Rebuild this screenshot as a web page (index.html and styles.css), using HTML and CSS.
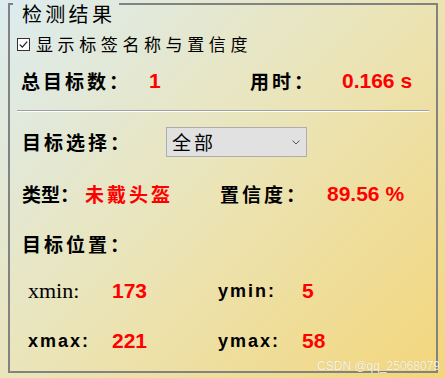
FILE: index.html
```html
<!DOCTYPE html>
<html lang="zh-CN">
<head>
  <meta charset="UTF-8" />
  <title>检测结果</title>
  <link rel="stylesheet" href="styles.css">
</head>
<body>

  <div class="panel">
    <div class="head">
      <span class="head-edge"></span>
      <span class="head-title">检测结果</span>
      <span class="head-fill"></span>
    </div>

    <div class="content">
      <label class="check-row">
        <svg class="check" width="13" height="13" viewBox="0 0 13 13">
          <rect x="0.5" y="0.5" width="12" height="12" fill="#fff" stroke="#333"/>
          <polyline points="2.8,6.6 5.3,9.1 10.2,3.6" fill="none" stroke="#222" stroke-width="1.3"/>
        </svg>
        <span class="check-text">显示标签名称与置信度</span>
      </label>

      <div class="row row-total">
        <span class="label">总目标数：</span>
        <span class="num">1</span>
        <span class="label">用时：</span>
        <span class="num">0.166 s</span>
      </div>

      <div class="sep"></div>

      <div class="row row-select">
        <span class="label">目标选择：</span>
        <div class="combo">
          <span class="combo-text">全部</span>
          <svg class="chevron" width="8" height="5" viewBox="0 0 8 5">
            <polyline points="0.5,0.5 4,4 7.5,0.5" fill="none" stroke="#555" stroke-width="1"/>
          </svg>
        </div>
      </div>

      <div class="row row-type">
        <span class="label tight">类型：</span>
        <span class="label red">未戴头盔</span>
        <span class="label">置信度：</span>
        <span class="num">89.56 %</span>
      </div>

      <div class="row row-head">
        <span class="label">目标位置：</span>
      </div>

      <div class="row row-pos first">
        <span class="serif">xmin:</span>
        <span class="num">173</span>
        <span class="coord">ymin:</span>
        <span class="num">5</span>
      </div>

      <div class="row row-pos">
        <span class="coord">xmax:</span>
        <span class="num">221</span>
        <span class="coord">ymax:</span>
        <span class="num">58</span>
      </div>
    </div>
  </div>

  <div class="watermark">CSDN @qq_25068079</div>

</body>
</html>
```

FILE: styles.css
```css
html, body {
  margin: 0;
  height: 378px;
}
body {
  position: relative;
  overflow: hidden;
  font-family: "Noto Sans CJK SC", sans-serif;
  color: #000;
  background: linear-gradient(135deg, #dcecf0 0%, #ebe4b6 50%, #f3d67b 100%);
}
.panel {
  box-sizing: border-box;
  width: 430px;
  height: 370px;
  margin: 3px 8px 0 8px;
  border: 2px solid #828282;
  border-top: none;
}
.head {
  display: flex;
  align-items: flex-start;
}
.head-edge {
  width: 3px;
  border-top: 2px solid #828282;
}
.head-title {
  padding: 0 4px 0 9px;
  font-size: 20px;
  line-height: 22px;
  letter-spacing: 3.3px;
}
.head-fill {
  flex: 1;
  border-top: 2px solid #828282;
}
.content {
  padding: 0 7px;
}
.check-row {
  display: flex;
  align-items: center;
  height: 20px;
  margin-top: 9px;
}
.check {
  display: block;
  margin-right: 6px;
}
.check-text {
  font-size: 17px;
  line-height: 20px;
  letter-spacing: 4.6px;
}
.row {
  display: grid;
  align-items: center;
  height: 30px;
  padding-left: 5px;
}
.row-total {
  grid-template-columns: 128px 101px 92px auto;
  margin-top: 12px;
  padding-left: 4px;
}
.row-select {
  grid-template-columns: 144px auto;
  margin-top: 15px;
}
.row-type {
  grid-template-columns: 63px 135px 107px auto;
  margin-top: 22px;
}
.row-head {
  margin-top: 20px;
}
.row-pos {
  grid-template-columns: 84px 106px 84px auto;
  margin-top: 20px;
  padding-left: 11px;
}
.row-pos.first {
  margin-top: 17px;
}
.label {
  font-size: 19px;
  font-weight: bold;
  line-height: 30px;
  letter-spacing: 3px;
  white-space: nowrap;
}
.label.tight {
  letter-spacing: 0;
}
.red {
  color: #ff0000;
}
.num {
  font-family: "Liberation Sans", Arial, sans-serif;
  font-size: 21px;
  font-weight: bold;
  line-height: 30px;
  color: #ff0000;
  white-space: nowrap;
}
.serif {
  font-family: "Liberation Serif", serif;
  font-size: 22px;
  line-height: 30px;
}
.coord {
  font-family: "Liberation Sans", Arial, sans-serif;
  font-size: 18px;
  font-weight: bold;
  line-height: 30px;
  letter-spacing: 2px;
}
.sep {
  height: 1px;
  margin-top: 14px;
  background: #a0a0a0;
  border-bottom: 1px solid #fff;
}
.combo {
  box-sizing: border-box;
  display: flex;
  align-items: center;
  justify-content: space-between;
  width: 141px;
  height: 30px;
  padding: 0 6px 0 5px;
  background: #e1e1e1;
  border: 1px solid #adadad;
}
.combo-text {
  font-size: 19px;
  line-height: 28px;
  letter-spacing: 3px;
}
.chevron {
  display: block;
}
.watermark {
  position: absolute;
  right: 5px;
  bottom: 5px;
  font-family: "Liberation Sans", Arial, sans-serif;
  font-size: 12px;
  color: rgba(255, 255, 255, 0.85);
  text-shadow: 0 0 1px rgba(0, 0, 0, 0.15);
}
```
